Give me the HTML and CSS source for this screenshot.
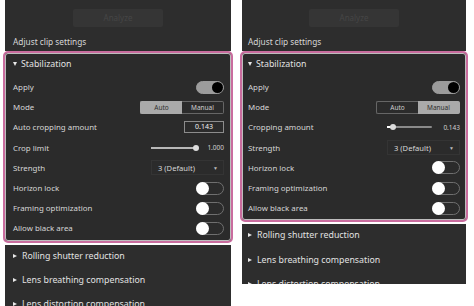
FILE: index.html
```html
<!DOCTYPE html>
<html lang="en">
  <head>
    <meta charset="UTF-8" />
    <meta name="viewport" content="width=device-width, initial-scale=1.0" />
    <title>Adjust clip settings</title>
    <link rel="stylesheet" href="styles.css">
  </head>
  <body>
    <div class="page">
      <!-- Auto mode -->
      <div class="pane pane-left">
        <div class="top">
          <div class="analyze">Analyze</div>
          <div class="title">Adjust clip settings</div>
        </div>
        <div class="stab">
          <div class="section-head"><span class="tri-down"></span>Stabilization</div>
          <div class="row">
            <span class="label">Apply</span>
            <span class="toggle on"><span class="knob"></span></span>
          </div>
          <div class="row">
            <span class="label">Mode</span>
            <span class="segment">
              <span class="seg active">Auto</span><span class="seg">Manual</span>
            </span>
          </div>
          <div class="row">
            <span class="label">Auto cropping amount</span>
            <span class="numbox">0.143</span>
          </div>
          <div class="row">
            <span class="label">Crop limit</span>
            <span class="slider">
              <span class="track"><span class="fill" style="width: 100%"></span><span class="thumb"></span></span>
              <span class="value">1.000</span>
            </span>
          </div>
          <div class="row">
            <span class="label">Strength</span>
            <span class="dropdown">3 (Default)<span class="arrow">▼</span></span>
          </div>
          <div class="row">
            <span class="label">Horizon lock</span>
            <span class="toggle"><span class="knob"></span></span>
          </div>
          <div class="row">
            <span class="label">Framing optimization</span>
            <span class="toggle"><span class="knob"></span></span>
          </div>
          <div class="row">
            <span class="label">Allow black area</span>
            <span class="toggle"><span class="knob"></span></span>
          </div>
        </div>
        <div class="rest">
          <div class="section-head closed"><span class="tri-right"></span>Rolling shutter reduction</div>
          <div class="section-head closed"><span class="tri-right"></span>Lens breathing compensation</div>
          <div class="section-head closed"><span class="tri-right"></span>Lens distortion compensation</div>
        </div>
      </div>

      <!-- Manual mode -->
      <div class="pane pane-right">
        <div class="top">
          <div class="analyze">Analyze</div>
          <div class="title">Adjust clip settings</div>
        </div>
        <div class="stab">
          <div class="section-head"><span class="tri-down"></span>Stabilization</div>
          <div class="row">
            <span class="label">Apply</span>
            <span class="toggle on"><span class="knob"></span></span>
          </div>
          <div class="row">
            <span class="label">Mode</span>
            <span class="segment">
              <span class="seg">Auto</span><span class="seg active">Manual</span>
            </span>
          </div>
          <div class="row">
            <span class="label">Cropping amount</span>
            <span class="slider">
              <span class="track"><span class="fill bright" style="width: 13%"></span><span class="thumb" style="left: 13%"></span></span>
              <span class="value">0.143</span>
            </span>
          </div>
          <div class="row">
            <span class="label">Strength</span>
            <span class="dropdown">3 (Default)<span class="arrow">▼</span></span>
          </div>
          <div class="row">
            <span class="label">Horizon lock</span>
            <span class="toggle"><span class="knob"></span></span>
          </div>
          <div class="row">
            <span class="label">Framing optimization</span>
            <span class="toggle"><span class="knob"></span></span>
          </div>
          <div class="row">
            <span class="label">Allow black area</span>
            <span class="toggle"><span class="knob"></span></span>
          </div>
        </div>
        <div class="rest">
          <div class="section-head closed"><span class="tri-right"></span>Rolling shutter reduction</div>
          <div class="section-head closed"><span class="tri-right"></span>Lens breathing compensation</div>
          <div class="section-head closed"><span class="tri-right"></span>Lens distortion compensation</div>
        </div>
      </div>
    </div>
  </body>
</html>
```

FILE: styles.css
```css
html,
body {
  margin: 0;
  padding: 0;
  background-color: #ffffff;
  overflow: hidden;
}

body {
  font-family: "Noto Sans", "Open Sans", sans-serif;
  color: #d6d6d6;
}

.page {
  display: flex;
  height: 306px;
}

.pane {
  display: flex;
  flex-direction: column;
}

.pane-left {
  width: 226px;
  margin-left: 5px;
}

.pane-right {
  width: 224px;
  margin-left: 11px;
}

.top {
  height: 51px;
  background-color: #2d2d2d;
  display: flex;
  flex-direction: column;
  align-items: center;
}

.analyze {
  margin-top: 9px;
  width: 90px;
  height: 18px;
  background-color: #353535;
  border-radius: 2px;
  color: #464646;
  font-size: 8px;
  line-height: 18px;
  text-align: center;
}

.title {
  align-self: stretch;
  padding-left: 8px;
  margin-top: 8px;
  font-size: 8.3px;
  line-height: 14px;
}

.pane-right .title,
.pane-right .section-head,
.pane-right .row {
  padding-left: 6px;
}

.stab {
  margin: 0 -2px;
  background-color: #2b2b2b;
  border: 2px solid #c96c9e;
  border-radius: 5px;
  box-shadow: inset 0 0 0 1px #bdbdbd;
  padding-bottom: 2px;
}

.section-head {
  display: flex;
  align-items: center;
  height: 24px;
  padding-left: 8px;
  font-size: 8.8px;
  color: #e2e2e2;
}

.stab .section-head {
  height: 22px;
  margin-bottom: 2px;
}

.tri-down {
  width: 0;
  height: 0;
  border-left: 2.5px solid transparent;
  border-right: 2.5px solid transparent;
  border-top: 4px solid #e8e8e8;
  margin-right: 4px;
}

.tri-right {
  width: 0;
  height: 0;
  border-top: 2.5px solid transparent;
  border-bottom: 2.5px solid transparent;
  border-left: 4px solid #e8e8e8;
  margin-right: 5px;
}

.row {
  display: flex;
  align-items: center;
  justify-content: space-between;
  height: 20.2px;
  padding: 0 7px 0 8px;
  font-size: 7.9px;
}

.pane-right .row {
  padding-right: 6px;
}

.toggle {
  position: relative;
  width: 26px;
  height: 11px;
  border: 1px solid #6f6f6f;
  border-radius: 7px;
}

.toggle .knob {
  position: absolute;
  top: -1px;
  left: -1px;
  width: 13px;
  height: 13px;
  border-radius: 50%;
  background-color: #ffffff;
}

.toggle.on {
  background-color: #9c9c9c;
  border-color: #9c9c9c;
}

.toggle.on .knob {
  left: auto;
  right: 0;
  top: 0;
  width: 11px;
  height: 11px;
  background-color: #000000;
}

.segment {
  display: flex;
  height: 13px;
  font-size: 6.5px;
}

.seg {
  width: 42px;
  box-sizing: border-box;
  border: 1px solid #666666;
  text-align: center;
  line-height: 11px;
  color: #cfcfcf;
}

.seg:first-child {
  border-right: none;
  border-radius: 2px 0 0 2px;
}

.seg:last-child {
  border-left: none;
  border-radius: 0 2px 2px 0;
}

.seg.active {
  background-color: #aaaaaa;
  border-color: #aaaaaa;
  color: #2e2e2e;
}

.numbox {
  width: 40px;
  height: 12px;
  box-sizing: border-box;
  border: 1px solid #8c8c8c;
  text-align: center;
  font-size: 7px;
  line-height: 10px;
  color: #f0f0f0;
}

.slider {
  display: flex;
  align-items: center;
}

.track {
  position: relative;
  width: 45px;
  height: 2px;
  background-color: #8a8a8a;
  border-radius: 1px;
}

.fill {
  display: block;
  height: 2px;
  background-color: #b8b8b8;
}

.fill.bright {
  background-color: #ffffff;
}

.thumb {
  position: absolute;
  top: -2px;
  left: 100%;
  width: 6px;
  height: 6px;
  margin-left: -3px;
  border-radius: 50%;
  background-color: #dcdcdc;
}

.value {
  width: 28px;
  text-align: right;
  font-size: 6.5px;
  color: #d0d0d0;
}

.dropdown {
  display: flex;
  justify-content: space-between;
  align-items: center;
  width: 73px;
  height: 15px;
  box-sizing: border-box;
  padding: 0 5px 0 6px;
  border: 1px solid #343434;
  font-size: 7.6px;
}

.arrow {
  font-size: 5px;
  color: #bbbbbb;
}

.rest {
  margin-top: 2px;
  background-color: #2d2d2d;
  overflow: hidden;
  flex: 1;
}

.pane-right .rest {
  flex: none;
  height: 60px;
}

.rest .section-head {
  height: 24.3px;
  padding-bottom: 2px;
  box-sizing: border-box;
}
```
